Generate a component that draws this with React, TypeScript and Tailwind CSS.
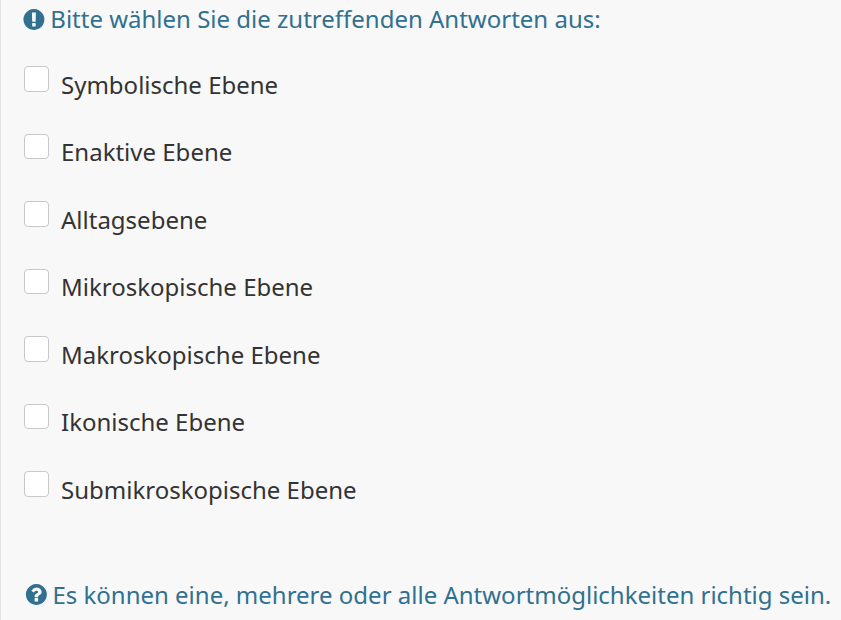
const options = [
  'Symbolische Ebene',
  'Enaktive Ebene',
  'Alltagsebene',
  'Mikroskopische Ebene',
  'Makroskopische Ebene',
  'Ikonische Ebene',
  'Submikroskopische Ebene',
];

const exclamation =
  'M896 128q209 0 385.5 103t279.5 279.5 103 385.5-103 385.5-279.5 279.5-385.5 103-385.5-103-279.5-279.5-103-385.5 103-385.5 279.5-279.5 385.5-103zm128 1247v-190q0-14-9-23.5t-22-9.5h-192q-13 0-23 10t-10 23v190q0 13 10 23t23 10h192q13 0 22-9.5t9-23.5zm-2-344l18-621q0-12-10-18-10-8-24-8h-220q-14 0-24 8-10 6-10 18l17 621q0 10 10 17.5t24 7.5h194q14 0 23.5-7.5t10.5-17.5z';

const question =
  'M1024 1376v-192q0-14-9-23t-23-9h-192q-14 0-23 9t-9 23v192q0 14 9 23t23 9h192q14 0 23-9t9-23zm256-672q0-88-55.5-163t-138.5-116-170-41q-243 0-371 213-15 24 8 42l132 100q7 6 19 6 16 0 25-12 53-68 86-92 34-24 86-24 48 0 85.5 26t37.5 59q0 38-20 61t-68 45q-63 28-115.5 86.5t-52.5 125.5v36q0 14 9 23t23 9h192q14 0 23-9t9-23q0-19 21.5-49.5t54.5-49.5q32-18 49-28.5t46-35 44.5-48 28-60.5 12.5-81zm384 192q0 209-103 385.5t-279.5 279.5-385.5 103-385.5-103-279.5-279.5-103-385.5 103-385.5 279.5-279.5 385.5-103 385.5 103 279.5 279.5 103 385.5z';

function HintIcon({ path, viewBox }: { path: string; viewBox: string }) {
  return (
    <svg viewBox={viewBox} fill="currentColor" aria-hidden="true" className="size-[21px] shrink-0 overflow-visible">
      <path d={path} />
    </svg>
  );
}

export default function App() {
  return (
    <main className="h-[620px] w-[841px] overflow-hidden border-l border-[#e4e4e4] bg-[#f8f8f8] pl-[23px] font-['Noto_Sans',sans-serif] text-[24px] leading-[34px] text-[#333333]">
      <div className="-ml-[0.7px] flex h-[38px] items-center gap-[6px] whitespace-nowrap text-[#31708f]">
        <HintIcon path={exclamation} viewBox="98 128 1536 1536" />
        <span>Bitte wählen Sie die zutreffenden Antworten aus:</span>
      </div>
      <ul className="mt-[28.1px]">
        {options.map((label) => (
          <li key={label} className="h-[67.5px]">
            <label className="flex items-start">
              <input type="checkbox" className="h-[25.6px] w-[25px] shrink-0 appearance-none rounded-[4px] border border-[#c8c8c8] bg-white" />
              <span className="ml-3 pt-[1.7px]">{label}</span>
            </label>
          </li>
        ))}
      </ul>
      <div className="mt-[39.2px] flex items-center gap-[5.4px] whitespace-nowrap pl-[2px] text-[#31708f]">
        <HintIcon path={question} viewBox="138 128 1536 1536" />
        <span>Es können eine, mehrere oder alle Antwortmöglichkeiten richtig sein.</span>
      </div>
    </main>
  );
}
